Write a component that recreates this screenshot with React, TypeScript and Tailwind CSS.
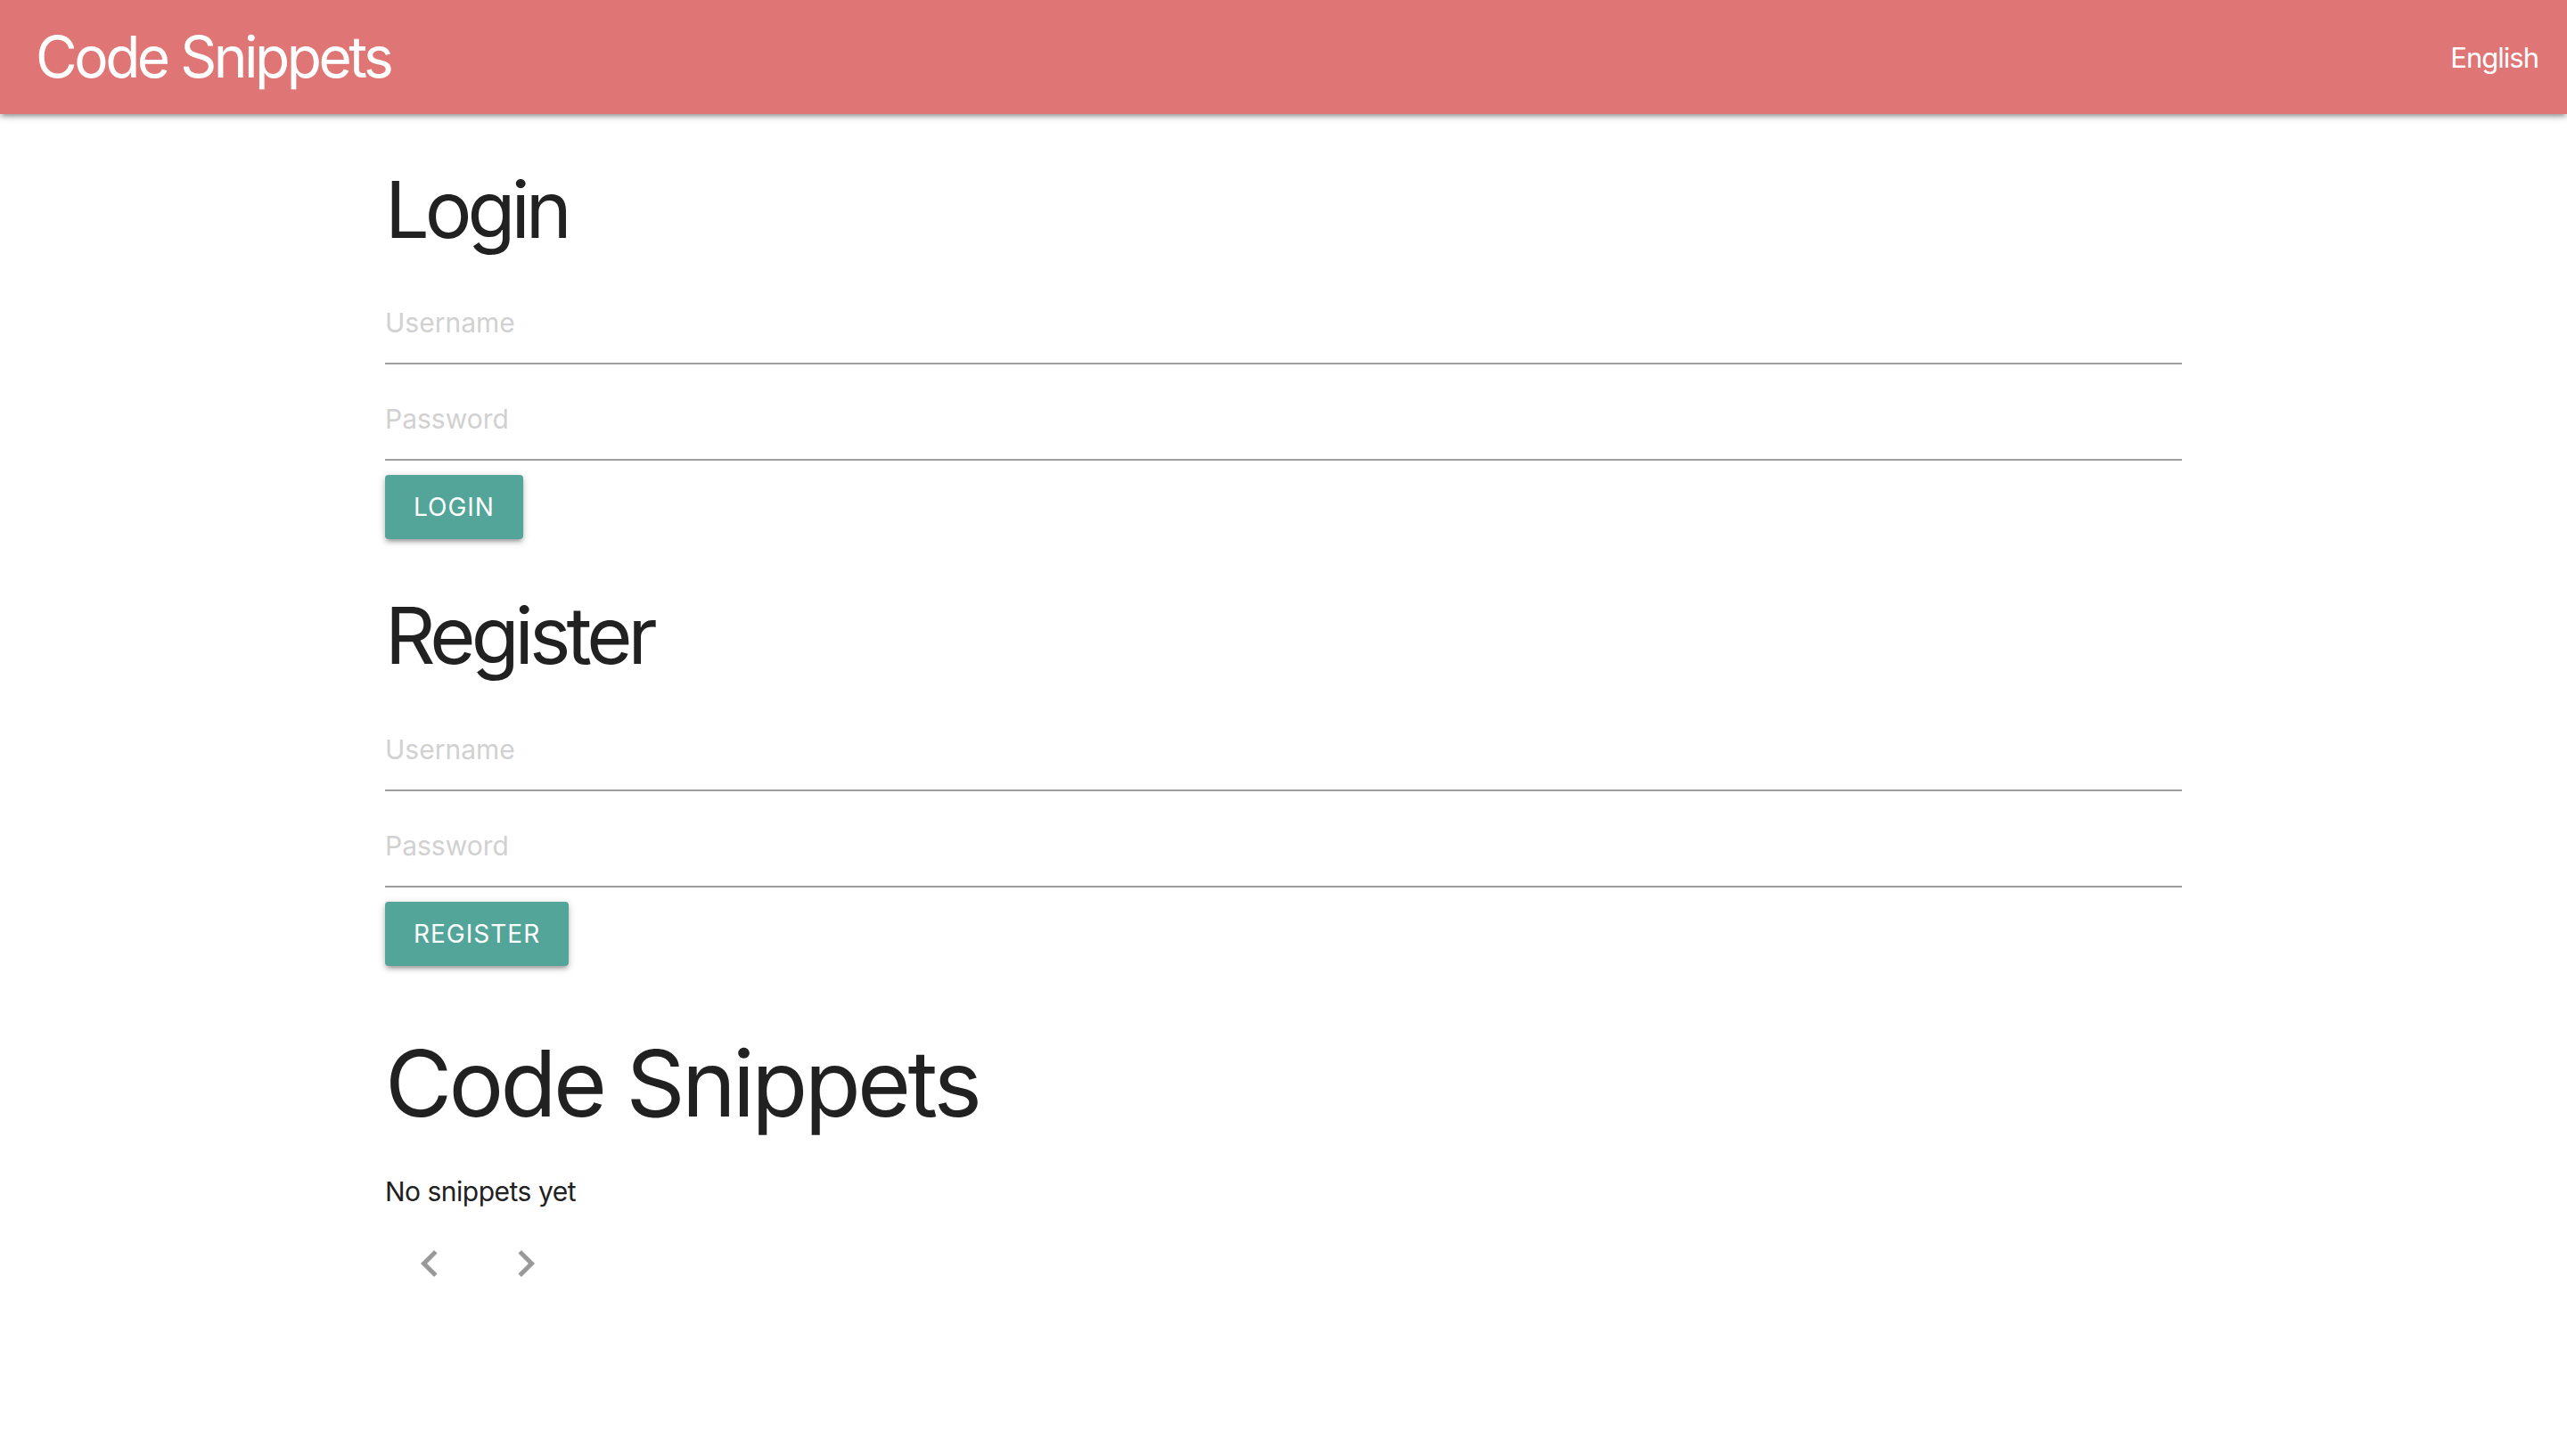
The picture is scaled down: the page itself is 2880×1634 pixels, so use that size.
import { useState } from "react";

const font = "font-['Inter',sans-serif]";

function Field({ placeholder, type = "text" }: { placeholder: string; type?: string }) {
  const [value, setValue] = useState("");
  return (
    <input
      type={type}
      value={value}
      onChange={(e) => setValue(e.target.value)}
      placeholder={placeholder}
      className="block w-full h-[92px] border-b-2 border-[#9e9e9e] bg-transparent text-[30px] text-[#212121] placeholder:text-[#d1d1d1] outline-none"
    />
  );
}

function Button({ label }: { label: string }) {
  return (
    <button className="self-start h-[72px] px-8 rounded-[4px] bg-[#53a59a] text-white text-[28px] tracking-[1px] uppercase leading-none shadow-[0_4px_4px_0_rgba(0,0,0,0.14),0_6px_2px_-4px_rgba(0,0,0,0.12),0_2px_10px_0_rgba(0,0,0,0.2)]">
      {label}
    </button>
  );
}

export default function App() {
  const [page] = useState(1);

  return (
    <div className={`min-h-screen bg-white ${font}`}>
      {/* Navbar */}
      <nav className="h-[128px] bg-[#df7575] flex items-center justify-between pl-[40px] pr-[32px] shadow-[0_4px_4px_0_rgba(0,0,0,0.14),0_6px_2px_-4px_rgba(0,0,0,0.12),0_2px_10px_0_rgba(0,0,0,0.2)] relative z-10">
        <span className="text-white text-[64px] leading-none tracking-[-3.5px]">Code Snippets</span>
        <span className="text-white text-[31px] leading-none tracking-[-1px]">English</span>
      </nav>

      <main className="w-[2016px] mx-auto flex flex-col text-[#212121]">
        {/* Login */}
        <h3 className="mt-[63px] text-[88px] leading-none tracking-[-5px]">Login</h3>
        <div className="mt-[38px] flex flex-col gap-4">
          <Field placeholder="Username" />
          <Field placeholder="Password" type="password" />
          <Button label="Login" />
        </div>

        {/* Register */}
        <h3 className="mt-[64px] text-[88px] leading-none tracking-[-5px]">Register</h3>
        <div className="mt-[39px] flex flex-col gap-4">
          <Field placeholder="Username" />
          <Field placeholder="Password" type="password" />
          <Button label="Register" />
        </div>

        {/* Snippets */}
        <h2 className="mt-[80px] text-[103px] leading-none tracking-[-3.7px]">Code Snippets</h2>
        <p className="mt-[55px] text-[30px] leading-none tracking-[-0.5px]">No snippets yet</p>

        <div className="mt-[36px] pl-[20px] flex gap-[48px] text-[#999999]" data-page={page}>
          <svg width="60" height="60" viewBox="0 0 24 24" fill="currentColor">
            <path d="M15.41 7.41L14 6l-6 6 6 6 1.41-1.41L10.83 12z" />
          </svg>
          <svg width="60" height="60" viewBox="0 0 24 24" fill="currentColor">
            <path d="M10 6L8.59 7.41 13.17 12l-4.58 4.59L10 18l6-6z" />
          </svg>
        </div>
      </main>
    </div>
  );
}
